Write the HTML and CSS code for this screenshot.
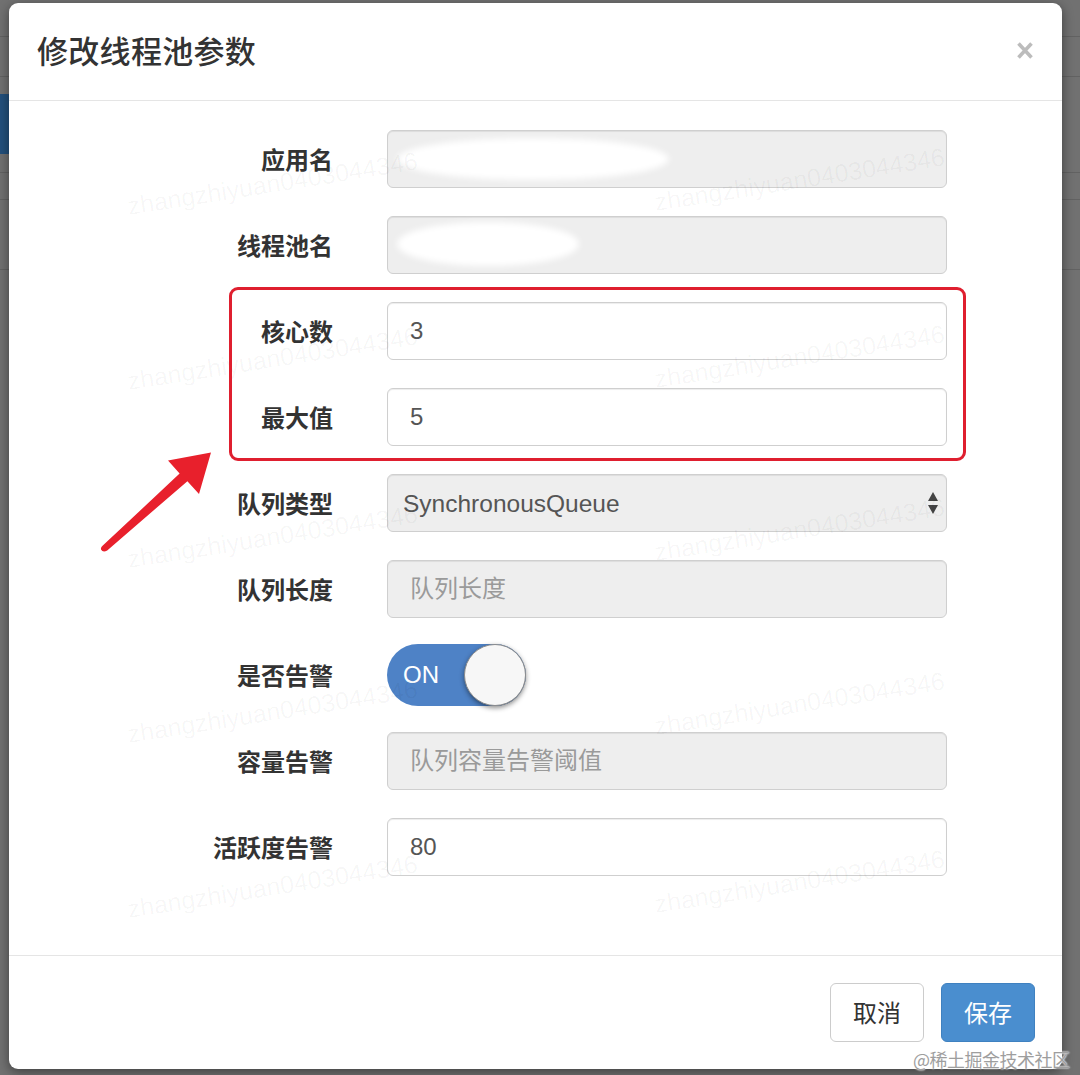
FILE: index.html
```html
<!DOCTYPE html>
<html lang="zh-CN">
<head>
<meta charset="utf-8">
<title>修改线程池参数</title>
<link rel="stylesheet" href="styles.css">
</head>
<body>
<div class="backdrop">
  <div class="bd-row bd-top"></div>
  <div class="bd-row bd-a"></div>
  <div class="bd-row bd-b"><div class="bd-btn"></div></div>
  <div class="bd-row bd-c"></div>
  <div class="bd-row bd-d"></div>
  <div class="bd-row bd-e"></div>
</div>

<div class="modal">
  <div class="modal-header">
    <h4 class="modal-title">修改线程池参数</h4>
    <button class="close" type="button" aria-label="关闭">
      <svg width="16" height="17" viewBox="0 0 16 17"><path d="M1.5 1.5 L14.5 15.5 M14.5 1.5 L1.5 15.5" stroke="#bcbcbc" stroke-width="3.6" fill="none"/></svg>
    </button>
  </div>
  <div class="modal-body">
    <form class="form">
      <label class="lbl">应用名</label>
      <div class="field"><input class="ctl" type="text" disabled><span class="blob b1"></span></div>

      <label class="lbl">线程池名</label>
      <div class="field"><input class="ctl" type="text" disabled><span class="blob b2"></span></div>

      <label class="lbl">核心数</label>
      <div class="field"><input class="ctl" type="text" value="3"></div>

      <label class="lbl">最大值</label>
      <div class="field"><input class="ctl" type="text" value="5"></div>

      <label class="lbl">队列类型</label>
      <div class="field">
        <select class="ctl sel"><option>SynchronousQueue</option></select>
        <svg class="caret" width="12" height="24" viewBox="0 0 12 24"><path d="M6 1 L11 10 L1 10 Z M6 23 L11 14 L1 14 Z" fill="#444"/></svg>
      </div>

      <label class="lbl">队列长度</label>
      <div class="field"><input class="ctl" type="text" placeholder="队列长度" disabled></div>

      <label class="lbl">是否告警</label>
      <div class="field">
        <div class="switch"><span class="on">ON</span><span class="knob"></span></div>
      </div>

      <label class="lbl">容量告警</label>
      <div class="field"><input class="ctl" type="text" placeholder="队列容量告警阈值" disabled></div>

      <label class="lbl">活跃度告警</label>
      <div class="field"><input class="ctl" type="text" value="80"></div>
    </form>
  </div>
  <div class="modal-footer">
    <button class="btn btn-default" type="button">取消</button>
    <button class="btn btn-primary" type="button">保存</button>
  </div>
</div>

<div class="wm-layer">
  <span class="wm w1">zhangzhiyuan0403044346</span>
  <span class="wm w2">zhangzhiyuan0403044346</span>
  <span class="wm w3">zhangzhiyuan0403044346</span>
  <span class="wm w4">zhangzhiyuan0403044346</span>
  <span class="wm w5">zhangzhiyuan0403044346</span>
  <span class="wm w6">zhangzhiyuan0403044346</span>
  <span class="wm w7">zhangzhiyuan0403044346</span>
  <span class="wm w8">zhangzhiyuan0403044346</span>
  <span class="wm w9">zhangzhiyuan0403044346</span>
  <span class="wm w10">zhangzhiyuan0403044346</span>
</div>

<div class="highlight"></div>
<svg class="arrow" width="1080" height="1075" viewBox="0 0 1080 1075">
  <path d="M102.8 545.6 L179.6 473.6 L168 460.5 L211 452.5 L199 494 L187.4 481.2 L107.2 550.4 Q103 553 101 549.5 Q100.5 547.5 102.8 545.6 Z" fill="#e8202c"/>
</svg>

<div class="brand">@稀土掘金技术社区</div>
</body>
</html>
```

FILE: styles.css
```css
* { box-sizing: border-box; }

html, body {
  margin: 0;
  padding: 0;
}

body {
  width: 1080px;
  height: 1075px;
  position: relative;
  overflow: hidden;
  background: #717171;
  font-family: "Liberation Sans", "Noto Sans CJK SC", sans-serif;
  color: #333;
}

/* dimmed page behind the dialog */
.backdrop {
  display: flex;
  flex-direction: column;
  height: 100%;
}
.bd-row { border-bottom: 1px solid #626262; }
.bd-top { height: 37px; }
.bd-a { height: 40px; }
.bd-b { height: 96px; padding-top: 17px; }
.bd-c { height: 27px; }
.bd-d { height: 70px; }
.bd-e { flex: 1; border-bottom: 0; }
.bd-btn {
  width: 9px;
  height: 60px;
  background: #23507c;
}

/* dialog */
.modal {
  position: absolute;
  left: 9px;
  top: 3px;
  width: 1053px;
  height: 1066px;
  background: #fff;
  border-radius: 9px;
  box-shadow: 0 3px 12px rgba(0, 0, 0, 0.45);
  display: flex;
  flex-direction: column;
}

.modal-header {
  height: 98px;
  border-bottom: 1px solid #e5e5e5;
  display: flex;
  align-items: center;
  justify-content: space-between;
  padding: 0 29px 4px 28px;
}
.modal-title {
  margin: 0;
  font-family: "Noto Sans CJK SC", sans-serif;
  font-size: 31px;
  font-weight: 500;
  color: #333;
  letter-spacing: 0.3px;
}
.close {
  border: 0;
  background: transparent;
  padding: 0;
  margin-top: 2px;
  width: 16px;
  height: 17px;
  display: flex;
}

.modal-body {
  flex: 1;
  padding-top: 29px;
}

.form {
  display: grid;
  grid-template-columns: 324px 560px;
  grid-auto-rows: 58px;
  column-gap: 54px;
  row-gap: 28px;
  margin: 0;
}

.lbl {
  display: flex;
  align-items: center;
  justify-content: flex-end;
  font-family: "Noto Sans CJK SC", sans-serif;
  font-size: 24px;
  font-weight: 700;
  color: #333;
  padding-bottom: 2px;
}

.field {
  position: relative;
  display: flex;
  align-items: center;
}

.ctl {
  width: 100%;
  height: 58px;
  border: 1px solid #cfcfcf;
  border-radius: 6px;
  background: #fff;
  padding: 0 22px;
  font-family: "Liberation Sans", "Noto Sans CJK SC", sans-serif;
  font-size: 24px;
  color: #555;
  box-shadow: inset 0 1px 1px rgba(0, 0, 0, 0.075);
  outline: none;
}
.ctl:disabled {
  background: #eeeeee;
  color: #555;
  opacity: 1;
}
.ctl::placeholder {
  color: #9a9a9a;
  font-family: "Noto Sans CJK SC", sans-serif;
}

.sel {
  appearance: none;
  -webkit-appearance: none;
  background: #eeeeee;
  padding-left: 15px;
  font-size: 24.5px;
}
.caret {
  position: absolute;
  right: 8px;
  top: 17px;
}

.blob {
  position: absolute;
  background: #fff;
  border-radius: 50%;
  filter: blur(3px);
}
.b1 { left: 10px; top: 8px; width: 272px; height: 42px; }
.b2 { left: 10px; top: 6px; width: 182px; height: 44px; }

/* toggle */
.switch {
  position: relative;
  width: 139px;
  height: 62px;
  border-radius: 31px;
  background: #4e82c6;
  display: flex;
  align-items: center;
  padding-left: 16px;
}
.on {
  color: #fff;
  font-size: 24px;
  font-family: "Liberation Sans", sans-serif;
}
.knob {
  position: absolute;
  right: 0;
  top: 0;
  width: 62px;
  height: 62px;
  border-radius: 50%;
  background: #f7f7f7;
  border: 1.5px solid #8c8c8c;
  box-shadow: 0 2px 5px rgba(0, 0, 0, 0.45);
}

.modal-footer {
  height: 114px;
  border-top: 1px solid #e5e5e5;
  display: flex;
  align-items: center;
  justify-content: flex-end;
  gap: 17px;
  padding: 0 27px 0 0;
}
.btn {
  width: 94px;
  height: 59px;
  border-radius: 6px;
  font-family: "Noto Sans CJK SC", sans-serif;
  font-size: 24px;
  padding: 0 0 2px;
}
.btn-default {
  background: #fff;
  border: 1px solid #cccccc;
  color: #333;
}
.btn-primary {
  background: #4a8ecf;
  border: 1px solid #3f81c0;
  color: #fff;
}

/* watermark text over the dialog */
.wm-layer {
  position: absolute;
  inset: 0;
  pointer-events: none;
}
.wm {
  position: absolute;
  font-family: "Liberation Sans", sans-serif;
  font-size: 25px;
  color: rgba(0, 0, 0, 0.04);
  white-space: nowrap;
  transform: rotate(-9deg);
  transform-origin: 0 100%;
}
.w1 { left: 130px; top: 192px; }
.w2 { left: 657px; top: 188px; }
.w3 { left: 130px; top: 367px; }
.w4 { left: 657px; top: 365px; }
.w5 { left: 130px; top: 545px; }
.w6 { left: 657px; top: 538px; }
.w7 { left: 130px; top: 720px; }
.w8 { left: 657px; top: 712px; }
.w9 { left: 130px; top: 895px; }
.w10 { left: 657px; top: 890px; }

/* annotation */
.highlight {
  position: absolute;
  left: 229px;
  top: 287px;
  width: 737px;
  height: 174px;
  border: 3.5px solid #df1f2f;
  border-radius: 9px;
  pointer-events: none;
}
.arrow {
  position: absolute;
  left: 0;
  top: 0;
  pointer-events: none;
}

.brand {
  position: absolute;
  left: 913px;
  top: 1046px;
  font-family: "Noto Sans CJK SC", sans-serif;
  font-size: 18px;
  color: #9e9e9e;
  text-shadow: 0 0 2px #fff, 0 0 2px #fff;
  letter-spacing: -0.5px;
  white-space: nowrap;
}
```
